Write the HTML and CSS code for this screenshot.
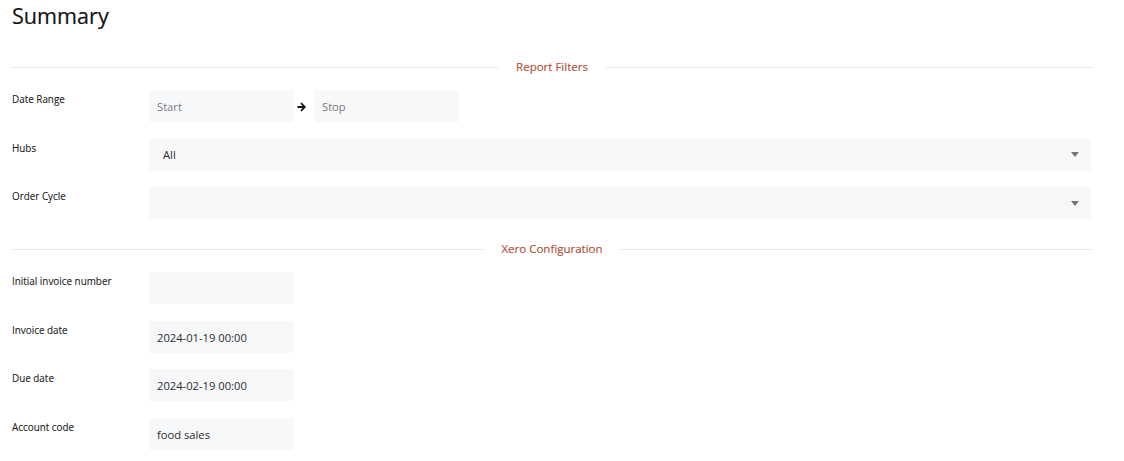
FILE: index.html
```html
<!DOCTYPE html>
<html>
<head>
<meta charset="utf-8">
<link rel="stylesheet" href="styles.css">
</head>
<body>
<div class="page">
  <h1 class="title">Summary</h1>

  <section class="section">
    <div class="section-head"><span>Report Filters</span></div>
    <div class="rows">
      <div class="row">
        <div class="label">Date Range</div>
        <div class="range">
          <div class="input placeholder">Start</div>
          <svg class="arrow" width="10" height="10" viewBox="0 0 10 10"><path d="M0.5 4h5.2L3.4 1.7 4.6 0.5 9 5 4.6 9.5 3.4 8.3 5.7 6H0.5z" fill="#111"/></svg>
          <div class="input placeholder">Stop</div>
        </div>
      </div>
      <div class="row">
        <div class="label">Hubs</div>
        <div class="select">All<span class="caret"></span></div>
      </div>
      <div class="row">
        <div class="label">Order Cycle</div>
        <div class="select"><span class="caret"></span></div>
      </div>
    </div>
  </section>

  <section class="section">
    <div class="section-head"><span>Xero Configuration</span></div>
    <div class="rows">
      <div class="row">
        <div class="label">Initial invoice number</div>
        <div class="input"></div>
      </div>
      <div class="row">
        <div class="label">Invoice date</div>
        <div class="input">2024-01-19 00:00</div>
      </div>
      <div class="row">
        <div class="label">Due date</div>
        <div class="input">2024-02-19 00:00</div>
      </div>
      <div class="row">
        <div class="label">Account code</div>
        <div class="input">food sales</div>
      </div>
    </div>
  </section>
</div>
</body>
</html>
```
FILE: styles.css
```css
html, body {
  margin: 0;
  padding: 0;
  background: #fff;
}
body {
  font-family: "Open Sans", "Liberation Sans", sans-serif;
  color: #222;
}
.page {
  width: 1080px;
  padding-left: 12px;
}
.title {
  margin: 0 0 30px 0;
  font-size: 21.6px;
  line-height: 30px;
  font-weight: 400;
  color: #141414;
  padding-top: 1px;
  height: 29px;
  -webkit-text-stroke: 0.2px #141414;
}
.section + .section {
  margin-top: 23px;
}
.section-head {
  display: flex;
  align-items: center;
  height: 14px;
  margin-bottom: 16px;
  font-size: 11.5px;
  color: #b14f38;
}
.section-head::before,
.section-head::after {
  content: "";
  flex: 1;
  height: 1px;
  background: #e9e9e9;
}
.section-head span {
  padding: 0 17px 0 17px;
  line-height: 14px;
  -webkit-text-stroke: 0.15px #b14f38;
}
.rows {
  display: flex;
  flex-direction: column;
  gap: 16.6px;
}
.row {
  display: flex;
  align-items: flex-start;
}
.label {
  width: 137px;
  flex: none;
  font-size: 9.9px;
  line-height: 14px;
  padding-top: 2px;
  color: #1c1c1c;
  -webkit-text-stroke: 0.1px #1c1c1c;
}
.input, .select {
  box-sizing: border-box;
  height: 32px;
  background: #f7f8fa;
  border-radius: 3px;
  font-size: 11.2px;
  line-height: 32px;
  padding: 1px 8px 0;
  color: #2b2b2b;
}
.input {
  width: 145px;
}
.placeholder {
  color: #7a7a7a;
}
.range {
  display: flex;
  align-items: center;
}
.arrow {
  margin: 1px 7px 0 3px;
}
.select {
  flex: 1;
  display: flex;
  align-items: center;
  justify-content: space-between;
  padding-left: 14px;
  padding-right: 12px;
  margin-right: 1px;
}
.caret {
  width: 0;
  height: 0;
  margin-left: auto;
  border-left: 4.5px solid transparent;
  border-right: 4.5px solid transparent;
  border-top: 5px solid #777;
  margin-top: -1px;
}
```
